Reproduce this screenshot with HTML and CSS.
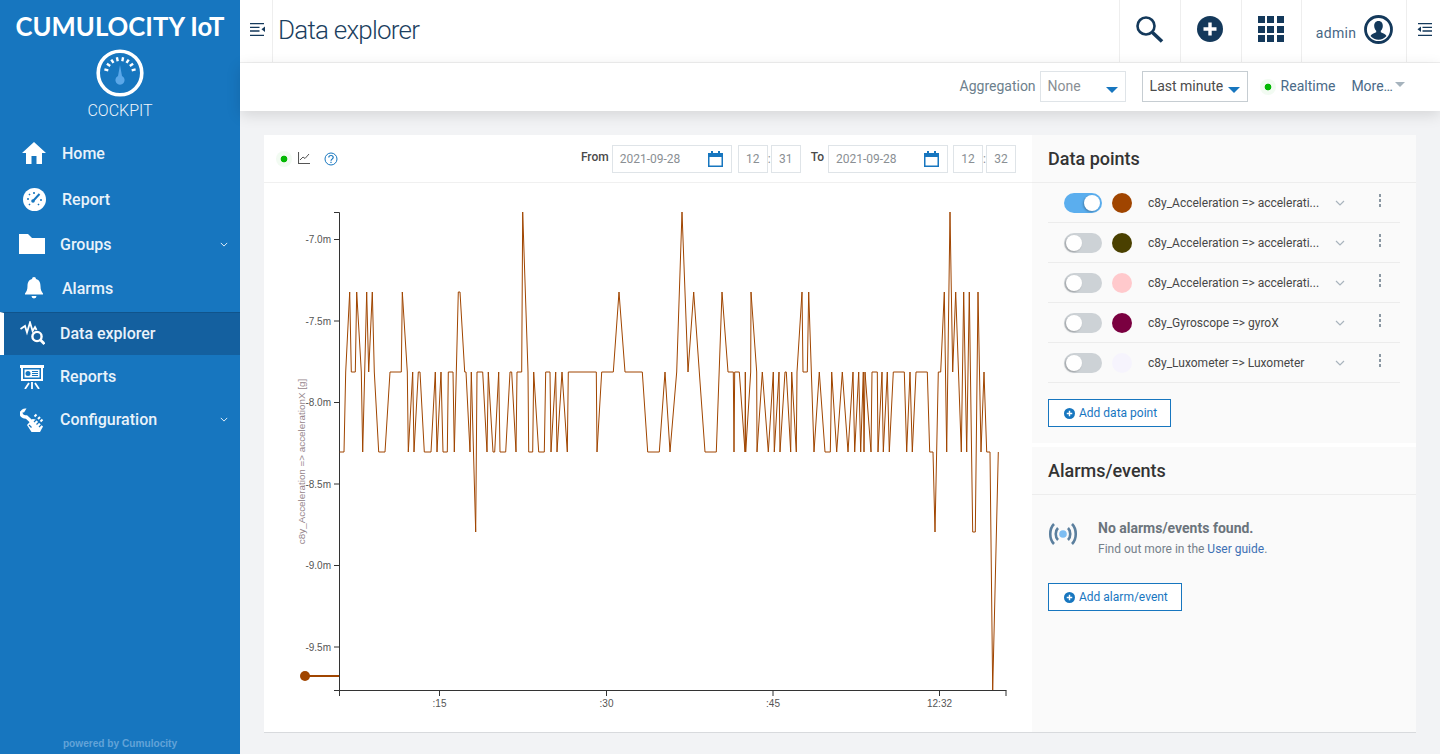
FILE: index.html
```html
<!DOCTYPE html>
<html lang="en">

<head>
    <meta charset="UTF-8">
    <meta name="viewport" content="width=device-width, initial-scale=1.0">
    <title>Data explorer</title>
    <link rel="stylesheet" href="styles.css">
</head>

<body>
    <svg class="defs" width="0" height="0">
        <symbol id="plus-circle" viewBox="0 0 26 26">
            <circle cx="13" cy="13" r="13" fill="currentColor"></circle>
            <path d="M13 6.5v13M6.5 13h13" stroke="#fff" stroke-width="3.4"></path>
        </symbol>
        <symbol id="chevron" viewBox="0 0 10 6">
            <path d="M1 1l4 4 4-4" fill="none" stroke="currentColor" stroke-width="1.2"></path>
        </symbol>
        <symbol id="calendar" viewBox="0 0 15 16">
            <path d="M0 2h3V0h2v2h5V0h2v2h3v14H0z M1.5 6v8.5h12V6z" fill="#1776bf" fill-rule="evenodd"></path>
        </symbol>
    </svg>

    <div class="app">
        <aside class="sidebar">
            <div class="logo">CUMULOCITY IoT</div>
            <svg class="gauge" width="48" height="48" viewBox="0 0 48 48">
                <circle cx="24" cy="24" r="21.8" fill="none" stroke="#fff" stroke-width="3.6"></circle>
                <path d="M21.7 12.2L20.9 8.3M26.3 12.2L27.1 8.3M17.5 13.9L15.3 10.6M30.5 13.9L32.7 10.6M14.2 17.1L10.9 14.8M33.8 17.1L37.1 14.8M12.3 21.3L8.4 20.4M35.7 21.3L39.6 20.4" stroke="#fff" stroke-width="2.4"></path>
                <path d="M24 16l2 11a4.6 4.6 0 1 1-4 0z" fill="#5ba7e8"></path>
            </svg>
            <div class="app-name">COCKPIT</div>

            <nav class="menu">
                <a class="menu-item shifted">
                    <span class="menu-icon">
                        <svg width="24" height="22" viewBox="0 0 24 22"><path d="M12 0l12 11h-4v11h-5.5v-8h-5v8H4V11H0z" fill="#fff"></path></svg>
                    </span>
                    Home
                </a>
                <a class="menu-item shifted">
                    <span class="menu-icon">
                        <svg width="23" height="23" viewBox="0 0 23 23">
                            <circle cx="11.5" cy="11.5" r="11.5" fill="#fff"></circle>
                            <path d="M10 13l6.500-7" stroke="#1776bf" stroke-width="2"></path>
                            <circle cx="10" cy="13" r="1.8" fill="#1776bf"></circle>
                            <path d="M4 11h2M11 4v2M6 6l1 1M19 12h-2M6 17l1-1M16 17l-1-1" stroke="#1776bf" stroke-width="1.6"></path>
                        </svg>
                    </span>
                    Report
                </a>
                <a class="menu-item">
                    <span class="menu-icon">
                        <svg width="26" height="20" viewBox="0 0 26 20"><path d="M0 0h9l4 4h13v16H0z" fill="#fff"></path></svg>
                    </span>
                    Groups
                    <svg class="menu-arrow" width="8" height="5"><use href="#chevron"></use></svg>
                </a>
                <a class="menu-item shifted">
                    <span class="menu-icon">
                        <svg width="18" height="22" viewBox="0 0 18 22"><path d="M9 0a2 2 0 0 1 2 2c3.500 1 4.500 4 4.500 7 0 4 1 5.500 2.500 7.500v1H0v-1C1.500 14.500 2.500 13 2.500 9c0-3 1-6 4.500-7a2 2 0 0 1 2-2zM6.500 19h5a2.500 2.500 0 0 1-5 0z" fill="#fff"></path></svg>
                    </span>
                    Alarms
                </a>
                <a class="menu-item active">
                    <span class="menu-icon">
                        <svg width="25" height="24" viewBox="0 0 25 24" fill="none" stroke="#fff">
                            <path d="M.5 8L5 5l2 6.500L10 1.500 12.600 10 15 6l1.500 3" stroke-width="1.8"></path>
                            <circle cx="17" cy="15.5" r="4.6" stroke-width="2.4"></circle>
                            <path d="M20.500 19l4 4" stroke-width="2.8"></path>
                        </svg>
                    </span>
                    Data explorer
                </a>
                <a class="menu-item">
                    <span class="menu-icon">
                        <svg width="24" height="24" viewBox="0 0 24 24">
                            <path d="M0 0h24v3h-1v13H1V3H0z M3 3v11h18V3z" fill="#fff" fill-rule="evenodd"></path>
                            <path d="M4.500 4.500h15v8h-15z" fill="#fff"></path>
                            <circle cx="8" cy="8.5" r="2.5" fill="#1776bf"></circle>
                            <path d="M12 6.500h6M12 8.500h6M12 10.500h6" stroke="#1776bf"></path>
                            <path d="M12 17v2M9 18l-4 6M15 18l4 6M12 19v5" stroke="#fff" stroke-width="1.8"></path>
                        </svg>
                    </span>
                    Reports
                </a>
                <a class="menu-item">
                    <span class="menu-icon">
                        <svg width="24" height="24" viewBox="0 0 24 24">
                            <path d="M1 3.500C.5 7 3 9.500 6.500 9L13 15" fill="none" stroke="#fff" stroke-width="3.4"></path>
                            <path d="M.5 4C1 1.500 3.500 0 6.500.5L4 4.500z" fill="#fff"></path>
                            <path d="M7 17l5.500-6 3 .5L23 18.500 20 24h-8.500z" fill="#fff"></path>
                            <path d="M14 14l3.500-3.500M16.500 16.500l3.500-3.500M19 19l3-3" stroke="#1776bf" stroke-width="1.2"></path>
                            <path d="M14.500 8.500l2-2M18 11l2-2M20.500 13.500l2-2" stroke="#fff" stroke-width="2"></path>
                            <path d="M9 17l2.500 2.500" stroke="#1776bf" stroke-width="1.2"></path>
                        </svg>
                    </span>
                    Configuration
                    <svg class="menu-arrow" width="8" height="5"><use href="#chevron"></use></svg>
                </a>
            </nav>

            <div class="powered">powered by Cumulocity</div>
        </aside>

        <div class="page">
            <header class="topbar">
                <button class="toggle" type="button">
                    <svg width="15" height="13" viewBox="0 0 15 13">
                        <path d="M0 .7h14M0 4.300h9.500M0 8h9.500M0 12.300h14" stroke="#14395b" stroke-width="1.3"></path>
                        <path d="M15 3.500v5.500l-3.500-2.700z" fill="#14395b"></path>
                    </svg>
                </button>
                <h1 class="title">Data explorer</h1>
                <div class="top-action search">
                    <svg width="28" height="27" viewBox="0 0 28 27" fill="none" stroke="#14395b">
                        <circle cx="10" cy="10" r="8.5" stroke-width="2.6"></circle>
                        <path d="M16.500 16.500l9.500 9" stroke-width="3.6"></path>
                    </svg>
                </div>
                <div class="top-action nudged">
                    <svg class="dark" width="26" height="26"><use href="#plus-circle"></use></svg>
                </div>
                <div class="top-action narrow">
                    <div class="apps">
                        <i></i><i></i><i></i><i></i><i></i><i></i><i></i><i></i><i></i>
                    </div>
                </div>
                <div class="top-action user">
                    <span>admin</span>
                    <svg width="29" height="29" viewBox="0 0 29 29">
                        <circle cx="14.5" cy="14.5" r="13" fill="none" stroke="#14395b" stroke-width="2.8"></circle>
                        <path d="M14.500 6c3 0 4.300 2.300 4.300 5 0 2-1 3.800-2 4.800v1.500c2 1 5 1.700 5.700 3.700a10.500 10.500 0 0 1-16 0c.7-2 3.700-2.700 5.700-3.700v-1.500c-1-1-2-2.800-2-4.800 0-2.700 1.300-5 4.300-5z" fill="#14395b"></path>
                    </svg>
                </div>
                <button class="toggle right" type="button">
                    <svg width="15" height="13" viewBox="0 0 15 13">
                        <path d="M1 .7h14M5.500 4.300H15M5.500 8H15M1 12.300h14" stroke="#14395b" stroke-width="1.3"></path>
                        <path d="M4 3.500v5.500L.5 6.300z" fill="#14395b"></path>
                    </svg>
                </button>
            </header>

            <div class="subbar">
                <span class="sub-label">Aggregation</span>
                <div class="select none-select">None<i class="caret"></i></div>
                <div class="select minute-select">Last minute<i class="caret"></i></div>
                <span class="live-dot realtime-dot"></span>
                <span class="sub-link realtime">Realtime</span>
                <span class="sub-link more">More…<i class="caret grey"></i></span>
            </div>

            <main class="content">
                <section class="card">
                    <div class="chart-panel">
                        <div class="toolbar">
                            <span class="live-dot"></span>
                            <svg class="chart-icon" width="12" height="12" viewBox="0 0 12 12" fill="none" stroke="#555">
                                <path d="M.5 0v11.500H12" stroke-width="1.1"></path>
                                <path d="M2 8l3-3 2 1.500L11 2" stroke-width="1"></path>
                            </svg>
                            <svg class="help-icon" width="14" height="14" viewBox="0 0 14 14" fill="none" stroke="#1776bf">
                                <circle cx="7" cy="7" r="6"></circle>
                                <path d="M4.800 5.500C4.800 4 6 3.500 7 3.500c1.300 0 2.200.8 2.200 1.900 0 1.700-2.200 1.700-2.200 3.400" stroke-width="1.2"></path>
                                <path d="M7 9.800v1.200" stroke-width="1.2"></path>
                            </svg>
                            <div class="range">
                                <span class="range-label">From</span>
                                <div class="field date">2021-09-28<svg width="15" height="16"><use href="#calendar"></use></svg></div>
                                <div class="time first"><div class="field">12</div><span>:</span><div class="field">31</div></div>
                                <span class="range-label to">To</span>
                                <div class="field date">2021-09-28<svg width="15" height="16"><use href="#calendar"></use></svg></div>
                                <div class="time"><div class="field">12</div><span>:</span><div class="field">32</div></div>
                            </div>
                        </div>

                        <!-- viewBox keeps the same coordinates as the page -->
                        <svg class="chart" width="768" height="549" viewBox="264 183 768 549">
                            <g class="axis">
                                <path d="M334 212.5h5.5V690.5M334 239.5h5M334 321h5M334 402.5h5M334 484h5M334 565.5h5M334 647h5"></path>
                                <path d="M334 690.5h672.5M339.5 690.5V696M439.5 690.5V696M606.5 690.5V696M773 690.5V696M939.5 690.5V696M1006 690.5V696"></path>
                            </g>
                            <g class="tick-y">
                                <text x="331" y="243">-7.0m</text>
                                <text x="331" y="325">-7.5m</text>
                                <text x="331" y="406">-8.0m</text>
                                <text x="331" y="488">-8.5m</text>
                                <text x="331" y="569">-9.0m</text>
                                <text x="331" y="651">-9.5m</text>
                            </g>
                            <g class="tick-x">
                                <text x="439.5" y="707">:15</text>
                                <text x="606.5" y="707">:30</text>
                                <text x="773" y="707">:45</text>
                                <text x="939.5" y="707">12:32</text>
                            </g>
                            <text class="axis-title" transform="translate(305 461.5) rotate(-90)">c8y_Acceleration =&gt; accelerationX [g]</text>
                            <circle cx="305" cy="676" r="5" fill="#a04500"></circle>
                            <path d="M305 676h34" stroke="#a04500" stroke-width="2"></path>
                            <polyline class="series" points="339.7,452 344,452 345.7,372 349.7,292 351.3,372 355.3,372 356.7,292 361.3,372 362.7,452 366.7,292 368.7,372 372.3,292 374.3,372 378.7,452 385,452 390,372 401.3,372 402.3,292 407.3,372 408.3,452 412.7,372 414,452 418.3,372 420,372 424.3,452 431,452 435.3,372 437,452 441,372 443,452 447.3,452 448.3,372 453,372 454.3,452 458.3,292 460,292 464.7,372 466,372 470,452 471.3,372 475.7,532 477,372 482.7,372 487,452 488.3,372 493,452 494.7,452 498.7,372 500,452 505.7,452 510,372 511.7,372 516,452 517,372 521.7,372 522.7,212 528,372 528.7,452 532.7,452 533.7,372 538.7,452 544.3,452 545.7,372 550,372 551,452 555.7,372 557,452 562,372 567.3,452 568.3,372 596.3,372 597,452 601.7,372 613.3,372 619,292 625,372 642.3,372 647.7,452 659.3,452 665,372 670,452 676.7,372 682,212 688,372 693.7,292 699.3,372 705,452 716.3,452 722,292 728,372 733.3,372 734,452 734.7,372 739.3,372 745,452 745.3,372 745.7,452 750.7,372 751,292 756.7,372 757,452 762.3,372 768.3,452 773.3,372 774.3,452 779,372 780,452 785,372 786.3,372 790.7,452 791.7,372 796.3,452 797,372 802,292 803,372 807.3,372 808.7,292 814,452 819.3,372 825,452 830.3,452 831.7,372 836.7,452 842.3,372 848,452 853,372 854.7,452 858.7,372 860.7,452 863.3,372 864,452 865,372 871,452 872,372 877.3,372 878,452 882,372 883.3,452 887.3,372 889.3,452 893.3,372 904.3,372 906.7,452 910,372 912.3,452 916,372 927.3,372 929.7,452 933,452 935,532 938.3,372 940.7,372 944.3,292 946.7,452 950,212 952.7,372 955.7,292 961.3,452 963.7,292 966.7,452 969.3,292 972.7,532 975.3,532 978,292 981,452 984,372 986.7,452 990,452 992.7,690 998.3,452"></polyline>
                        </svg>
                    </div>

                    <div class="side-panel">
                        <div class="side-section points">
                            <h2 class="side-title">Data points</h2>
                            <ul class="point-list">
                                <li class="point">
                                    <span class="switch on"></span>
                                    <span class="swatch sw-brown"></span>
                                    <span class="point-name">c8y_Acceleration =&gt; accelerati...</span>
                                    <svg class="point-arrow" width="10" height="6"><use href="#chevron"></use></svg>
                                    <span class="kebab"><i></i><i></i><i></i></span>
                                </li>
                                <li class="point">
                                    <span class="switch"></span>
                                    <span class="swatch sw-olive"></span>
                                    <span class="point-name">c8y_Acceleration =&gt; accelerati...</span>
                                    <svg class="point-arrow" width="10" height="6"><use href="#chevron"></use></svg>
                                    <span class="kebab"><i></i><i></i><i></i></span>
                                </li>
                                <li class="point">
                                    <span class="switch"></span>
                                    <span class="swatch sw-pink"></span>
                                    <span class="point-name">c8y_Acceleration =&gt; accelerati...</span>
                                    <svg class="point-arrow" width="10" height="6"><use href="#chevron"></use></svg>
                                    <span class="kebab"><i></i><i></i><i></i></span>
                                </li>
                                <li class="point">
                                    <span class="switch"></span>
                                    <span class="swatch sw-wine"></span>
                                    <span class="point-name">c8y_Gyroscope =&gt; gyroX</span>
                                    <svg class="point-arrow" width="10" height="6"><use href="#chevron"></use></svg>
                                    <span class="kebab"><i></i><i></i><i></i></span>
                                </li>
                                <li class="point">
                                    <span class="switch"></span>
                                    <span class="swatch sw-pale"></span>
                                    <span class="point-name">c8y_Luxometer =&gt; Luxometer</span>
                                    <svg class="point-arrow" width="10" height="6"><use href="#chevron"></use></svg>
                                    <span class="kebab"><i></i><i></i><i></i></span>
                                </li>
                            </ul>
                            <button class="add-btn" type="button"><svg width="11" height="11"><use href="#plus-circle"></use></svg>Add data point</button>
                        </div>

                        <div class="side-section alarms">
                            <h2 class="side-title">Alarms/events</h2>
                            <div class="empty">
                                <svg width="30" height="22" viewBox="0 0 30 22" fill="none" stroke="#5b7f9e" stroke-width="2.6">
                                    <path d="M6 1C1 6 1 16 6 21M24 1c5 5 5 15 0 20M10 5c-3 3-3 9 0 12M20 5c3 3 3 9 0 12"></path>
                                    <circle cx="15" cy="11" r="3.8" fill="#7dbdf2" stroke="none"></circle>
                                </svg>
                                <div>
                                    <p class="empty-title">No alarms/events found.</p>
                                    <p class="empty-text">Find out more in the <a>User guide</a>.</p>
                                </div>
                            </div>
                            <button class="add-btn" type="button"><svg width="11" height="11"><use href="#plus-circle"></use></svg>Add alarm/event</button>
                        </div>
                    </div>
                </section>
            </main>
        </div>
    </div>
</body>

</html>
```

FILE: styles.css
```css
* {
    box-sizing: border-box;
}

body {
    margin: 0;
    height: 754px;
    overflow: hidden;
    font-family: Roboto, "Liberation Sans", sans-serif;
    background-color: #f2f3f5;
}

.defs {
    display: block;
    height: 0;
}

.app {
    display: flex;
    height: 754px;
}

/* sidebar */
.sidebar {
    width: 240px;
    flex-shrink: 0;
    display: flex;
    flex-direction: column;
    align-items: center;
    background-color: #1776bf;
    color: #fff;
}

.logo {
    margin-top: 13px;
    font-family: Lato, sans-serif;
    font-weight: 700;
    font-size: 25.7px;
    line-height: 26px;
    white-space: nowrap;
}

.gauge {
    margin-top: 10px;
    display: block;
}

.app-name {
    margin-top: 5px;
    font-size: 16px;
    line-height: 18px;
    font-weight: 300;
    color: #eef5fb;
}

.menu {
    margin-top: 12px;
    width: 100%;
    display: grid;
    grid-template-rows: 44px 48px 42px 46px 43px 43px 43px;
}

.menu-item {
    display: flex;
    align-items: center;
    padding-left: 18px;
    font-size: 16px;
    font-weight: 500;
    color: #e9f2fa;
}

.menu-item.shifted {
    padding-left: 20px;
}

.menu-item:nth-child(-n+4) {
    padding-bottom: 2px;
}

.menu-icon {
    width: 30px;
    margin-right: 13px;
    margin-left: -1px;
    flex-shrink: 0;
    display: flex;
    justify-content: center;
}

.menu-icon svg {
    display: block;
}

.menu-item.active {
    background-color: #14609f;
    border-top: 1px solid #10548c;
    border-left: 4px solid #fff;
    padding-left: 14px;
    padding-bottom: 2px;
}

.menu-arrow {
    margin-left: auto;
    margin-right: 12px;
}

.powered {
    margin-top: auto;
    margin-bottom: 3px;
    font-family: "Liberation Sans", sans-serif;
    font-size: 10.15px;
    line-height: 14px;
    font-weight: 700;
    color: #62a3d8;
}

/* top */
.page {
    flex: 1;
    min-width: 0;
    display: flex;
    flex-direction: column;
}

.topbar {
    height: 63px;
    display: flex;
    align-items: stretch;
    background-color: #fff;
    border-bottom: 1px solid #f0f0f0;
}

.toggle {
    width: 33px;
    padding: 0 0 3px 10px;
    border: 0;
    background: none;
    border-right: 1px solid #eeeeee;
    display: flex;
    align-items: center;
}

.toggle.right {
    width: 34px;
    padding-left: 10px;
    border-right: 0;
    border-left: 1px solid #eeeeee;
}

.title {
    margin: 0 auto 0 5px;
    font-size: 26px;
    line-height: 60px;
    font-weight: 300;
    letter-spacing: -.77px;
    color: #1c3f60;
}

.top-action {
    width: 61px;
    display: flex;
    align-items: center;
    justify-content: center;
    padding-bottom: 4px;
    border-left: 1px solid #eeeeee;
    color: #14395b;
}

.top-action.search {
    padding-right: 1px;
    padding-bottom: 3px;
}

.top-action.nudged {
    padding-right: 2px;
}

.top-action.narrow {
    width: 60px;
    padding-right: 2px;
}

.apps {
    width: 26px;
    height: 26px;
    display: grid;
    grid-template-columns: repeat(3, 1fr);
    gap: 2.5px;
}

.apps i {
    background-color: #14395b;
}

.top-action.user {
    width: 105px;
    gap: 8px;
    font-size: 14px;
    color: #476785;
    letter-spacing: .3px;
    padding-left: 1px;
}

.top-action.user span {
    padding-top: 7px;
}

.subbar {
    height: 48px;
    flex-shrink: 0;
    display: flex;
    align-items: center;
    justify-content: flex-end;
    padding-right: 35px;
    padding-bottom: 2px;
    background-color: #fff;
    box-shadow: 0 4px 14px rgba(0, 0, 0, .12);
    font-size: 14px;
    position: relative;
}

.sub-label {
    color: #6d7f8d;
    margin-right: 4px;
}

.select {
    height: 31px;
    margin-top: 1px;
    flex-shrink: 0;
    display: flex;
    align-items: center;
    padding-left: 7px;
    padding-bottom: 1px;
    border: 1px solid #dfe4e8;
    position: relative;
    color: #8a8f94;
}

.none-select {
    width: 86px;
    margin-right: 16px;
}

.minute-select {
    width: 106px;
    border-color: #c6cdd2;
    color: #4b4b4b;
    margin-right: 10px;
}

.caret {
    display: block;
    width: 0;
    height: 0;
    border-left: 6px solid transparent;
    border-right: 6px solid transparent;
    border-top: 6px solid #1776bf;
}

.select .caret {
    position: absolute;
    right: 7px;
    top: 15px;
}

.caret.grey {
    border-left-width: 5px;
    border-right-width: 5px;
    border-top: 5px solid #a6b3bd;
}

.live-dot {
    width: 16px;
    height: 16px;
    flex-shrink: 0;
    border-radius: 50%;
    background: radial-gradient(circle, #04b804 0, #04b804 3px, #f2fbf2 3.7px);
}

.realtime-dot {
    margin-left: 2px;
    margin-top: 2px;
}

.sub-link {
    color: #4a6a88;
}

.realtime {
    margin-left: 5px;
    margin-right: 16px;
}

.more {
    display: flex;
    align-items: center;
}

.more .caret {
    margin: 0 0 3px 2px;
}

/* main card */
.content {
    flex: 1;
    min-height: 0;
    padding: 24px 24px 21px;
}

.card {
    height: 598px;
    display: flex;
    background-color: #fff;
    border-bottom: 1px solid #d8dadd;
}

.chart-panel {
    width: 768px;
    flex-shrink: 0;
}

.toolbar {
    height: 48px;
    display: flex;
    align-items: center;
    padding: 0 16px 0 12px;
    border-bottom: 1px solid #f0f0f0;
}

.chart-icon {
    margin-left: 6px;
    margin-bottom: 2px;
}

.help-icon {
    margin-left: 14px;
}

.range {
    margin-left: auto;
    display: flex;
    align-items: center;
    font-size: 12px;
}

.range-label {
    margin-right: 3px;
    margin-bottom: 4px;
    color: #4a4a4a;
    font-weight: 500;
}

.range-label.to {
    margin-left: 10px;
    margin-right: 4px;
}

.field {
    width: 30px;
    height: 28px;
    display: flex;
    align-items: center;
    justify-content: center;
    border: 1px solid #dfe4e8;
    color: #8a8f94;
}

.field.date {
    width: 120px;
    justify-content: space-between;
    padding: 0 8px 0 7px;
}

.time {
    margin-left: 5px;
    display: flex;
    align-items: center;
    color: #8a8f94;
}

.time.first {
    margin-left: 6px;
}

.time span {
    width: 3px;
    text-align: center;
}

.chart {
    display: block;
}

.axis path {
    fill: none;
    stroke: #333;
    stroke-width: 1;
}

.tick-y text,
.tick-x text {
    font-family: "Liberation Sans", sans-serif;
    font-size: 10px;
    fill: #555;
}

.tick-y text {
    text-anchor: end;
}

.tick-x text {
    text-anchor: middle;
}

.axis-title {
    font-family: "Liberation Sans", sans-serif;
    font-size: 9.85px;
    fill: #96868c;
    text-anchor: middle;
}

.series {
    fill: none;
    stroke: #a04500;
    stroke-width: 1;
}

/* right panel */
.side-panel {
    flex: 1;
    min-width: 0;
    display: flex;
    flex-direction: column;
    gap: 4px;
    background-color: #fff;
}

.side-section {
    background-color: #fafafa;
}

.points {
    height: 308px;
}

.alarms {
    flex: 1;
}

.side-title {
    margin: 0;
    padding: 0 16px;
    height: 48px;
    display: flex;
    align-items: center;
    font-size: 18px;
    font-weight: 500;
    color: #333;
    border-bottom: 1px solid #ededed;
}

.point-list {
    list-style: none;
    margin: 0 16px 16px;
    padding: 0;
}

.point {
    height: 40px;
    display: flex;
    align-items: center;
    padding-left: 16px;
    border-bottom: 1px solid #ececec;
}

.switch {
    width: 38px;
    height: 20px;
    flex-shrink: 0;
    border-radius: 10px;
    background-color: #cdd2d6;
    position: relative;
}

.switch::after {
    content: "";
    position: absolute;
    left: 2px;
    top: 2px;
    width: 16px;
    height: 16px;
    border-radius: 50%;
    background-color: #fff;
    box-shadow: -1px 1px 2px rgba(0, 0, 0, .25);
}

.switch.on {
    background-color: #5baeee;
}

.switch.on::after {
    left: 20px;
}

.swatch {
    width: 20px;
    height: 20px;
    flex-shrink: 0;
    margin-left: 10px;
    border-radius: 50%;
}

.sw-brown {
    background-color: #a04500;
}

.sw-olive {
    background-color: #4a4000;
}

.sw-pink {
    background-color: #ffc9cc;
}

.sw-wine {
    background-color: #7a0040;
}

.sw-pale {
    background-color: #f6f4fd;
}

.point-name {
    width: 172px;
    margin-left: 16px;
    font-size: 12px;
    color: #474747;
    white-space: nowrap;
}

.point-arrow {
    margin-left: 15px;
    color: #a9b4bd;
    flex-shrink: 0;
}

.kebab {
    margin-left: 34px;
    margin-bottom: 4px;
    display: flex;
    flex-direction: column;
    gap: 2px;
}

.kebab i {
    display: block;
    width: 2px;
    height: 3px;
    background-color: #8b98a3;
}

.add-btn {
    height: 28px;
    margin-left: 16px;
    padding: 0 13px 0 15px;
    display: inline-flex;
    align-items: center;
    gap: 4px;
    background: #fff;
    border: 1px solid #1776bf;
    font-family: inherit;
    font-size: 12px;
    color: #1776bf;
}

.empty {
    display: flex;
    align-items: flex-start;
    gap: 20px;
    padding: 24px 16px 26px;
}

.empty svg {
    margin-top: 4px;
    flex-shrink: 0;
}

.empty-title {
    margin: 0;
    font-size: 14px;
    line-height: 18px;
    font-weight: 700;
    color: #6b747c;
}

.empty-text {
    margin: 4px 0 0;
    font-size: 12px;
    line-height: 16px;
    color: #75808a;
}

.empty-text a {
    color: #3d70b4;
}
```
